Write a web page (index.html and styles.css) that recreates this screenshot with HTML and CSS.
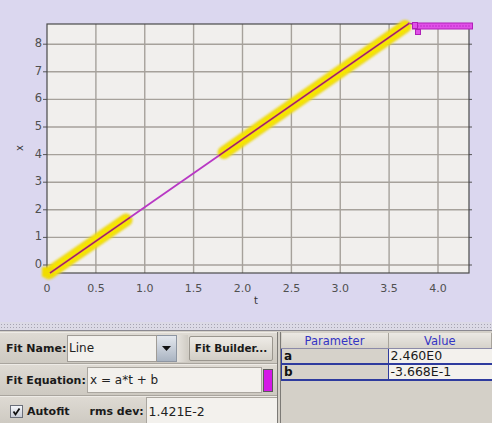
FILE: index.html
```html
<!DOCTYPE html>
<html>
<head>
<meta charset="utf-8">
<link rel="stylesheet" href="styles.css">
</head>
<body>
<div class="app">
  <svg class="plot" width="492" height="322" viewBox="0 0 492 322">
    <defs>
      <filter id="soft" x="-10%" y="-10%" width="120%" height="120%">
        <feGaussianBlur stdDeviation="0.8"/>
      </filter>
    </defs>
    <rect class="plot-bg" x="47" y="24" width="422" height="249"/>
    <g class="grid">
      <line x1="95.9" y1="24" x2="95.9" y2="273"/>
      <line x1="144.75" y1="24" x2="144.75" y2="273"/>
      <line x1="193.6" y1="24" x2="193.6" y2="273"/>
      <line x1="242.5" y1="24" x2="242.5" y2="273"/>
      <line x1="291.4" y1="24" x2="291.4" y2="273"/>
      <line x1="340.25" y1="24" x2="340.25" y2="273"/>
      <line x1="389.1" y1="24" x2="389.1" y2="273"/>
      <line x1="438" y1="24" x2="438" y2="273"/>
      <line x1="47" y1="265" x2="469" y2="265"/>
      <line x1="47" y1="237.4" x2="469" y2="237.4"/>
      <line x1="47" y1="209.8" x2="469" y2="209.8"/>
      <line x1="47" y1="182.2" x2="469" y2="182.2"/>
      <line x1="47" y1="154.6" x2="469" y2="154.6"/>
      <line x1="47" y1="127" x2="469" y2="127"/>
      <line x1="47" y1="99.4" x2="469" y2="99.4"/>
      <line x1="47" y1="71.8" x2="469" y2="71.8"/>
      <line x1="47" y1="44.2" x2="469" y2="44.2"/>
    </g>
    <g class="ticks">
      <line x1="43" y1="265" x2="47" y2="265"/>
      <line x1="43" y1="237.4" x2="47" y2="237.4"/>
      <line x1="43" y1="209.8" x2="47" y2="209.8"/>
      <line x1="43" y1="182.2" x2="47" y2="182.2"/>
      <line x1="43" y1="154.6" x2="47" y2="154.6"/>
      <line x1="43" y1="127" x2="47" y2="127"/>
      <line x1="43" y1="99.4" x2="47" y2="99.4"/>
      <line x1="43" y1="71.8" x2="47" y2="71.8"/>
      <line x1="43" y1="44.2" x2="47" y2="44.2"/>
      <line x1="469" y1="265" x2="472" y2="265"/>
      <line x1="469" y1="237.4" x2="472" y2="237.4"/>
      <line x1="469" y1="209.8" x2="472" y2="209.8"/>
      <line x1="469" y1="182.2" x2="472" y2="182.2"/>
      <line x1="469" y1="154.6" x2="472" y2="154.6"/>
      <line x1="469" y1="127" x2="472" y2="127"/>
      <line x1="469" y1="99.4" x2="472" y2="99.4"/>
      <line x1="469" y1="71.8" x2="472" y2="71.8"/>
      <line x1="469" y1="44.2" x2="472" y2="44.2"/>
    </g>
    <rect class="frame" x="47" y="24" width="422" height="249"/>
    <g class="ylabels">
      <text x="42" y="268">0</text>
      <text x="42" y="240.4">1</text>
      <text x="42" y="212.8">2</text>
      <text x="42" y="185.2">3</text>
      <text x="42" y="157.6">4</text>
      <text x="42" y="130">5</text>
      <text x="42" y="102.4">6</text>
      <text x="42" y="74.8">7</text>
      <text x="42" y="47.2">8</text>
    </g>
    <g class="xlabels">
      <text x="47" y="292">0</text>
      <text x="95.9" y="292">0.5</text>
      <text x="144.75" y="292">1.0</text>
      <text x="193.6" y="292">1.5</text>
      <text x="242.5" y="292">2.0</text>
      <text x="291.4" y="292">2.5</text>
      <text x="340.25" y="292">3.0</text>
      <text x="389.1" y="292">3.5</text>
      <text x="438" y="292">4.0</text>
    </g>
    <text class="axis-title" x="256" y="304">t</text>
    <text class="axis-title" x="23" y="148" transform="rotate(-90 23 148)">x</text>

    <g class="band" filter="url(#soft)">
      <line class="band-outer" x1="49" y1="273" x2="126" y2="220"/>
      <line class="band-inner" x1="49" y1="273" x2="126" y2="220"/>
      <line class="band-outer" x1="224" y1="152.5" x2="405" y2="26.5"/>
      <line class="band-inner" x1="224" y1="152.5" x2="405" y2="26.5"/>
      <rect class="band-blob" x="42" y="267" width="12" height="10"/>
    </g>
    <line class="fit" x1="50" y1="273" x2="409" y2="23.5"/>
    <line class="datal" x1="50" y1="273" x2="130" y2="217.4"/>
    <line class="datal" x1="219" y1="155.6" x2="409" y2="23.5"/>
    <g class="marks">
      <line x1="408" y1="23" x2="414" y2="24"/>
      <rect x="412.5" y="23" width="60" height="6"/>
      <line class="mark-inner" x1="414" y1="26" x2="471" y2="26"/>
      <rect x="415.5" y="29.5" width="5" height="5"/>
      <rect x="412.5" y="22.5" width="5" height="6"/>
    </g>
  </svg>
  <div class="divider"></div>
  <div class="panels">
    <div class="fitpanel">
      <div class="row">
        <span class="lbl lbl-name">Fit Name:</span>
        <div class="combo">
          <span class="combo-text">Line</span>
          <span class="combo-btn"><svg width="9" height="5" viewBox="0 0 9 5"><path d="M0 0 H9 L4.5 5 Z" fill="#111"/></svg></span>
        </div>
        <span class="sep"></span>
        <span class="btn">Fit Builder...</span>
      </div>
      <div class="row">
        <span class="lbl lbl-eq">Fit Equation:</span>
        <div class="field field-eq">x = a*t + b</div>
        <span class="swatch"></span>
      </div>
      <div class="row row-last">
        <span class="check"><svg width="11" height="11" viewBox="0 0 11 11"><path d="M2.5 5.5 L4.5 8.5 L8.5 2.5" fill="none" stroke="#111" stroke-width="1.8"/></svg></span>
        <span class="lbl lbl-auto">Autofit</span>
        <span class="lbl lbl-rms">rms dev:</span>
        <div class="field field-rms">1.421E-2</div>
      </div>
    </div>
    <div class="tablepanel">
      <table class="params">
        <thead>
          <tr><th class="c1">Parameter</th><th class="c2">Value</th></tr>
        </thead>
        <tbody>
          <tr><td class="c1 pname">a</td><td class="c2 pval">2.460E0</td></tr>
          <tr><td class="c1 pname">b</td><td class="c2 pval">-3.668E-1</td></tr>
        </tbody>
      </table>
    </div>
  </div>
</div>
</body>
</html>
```

FILE: styles.css
```css
html, body {
  margin: 0;
  padding: 0;
}
body {
  width: 492px;
  height: 423px;
  overflow: hidden;
  background: #dbd7ef;
  font-family: "DejaVu Sans", "Noto Sans", sans-serif;
}
.app {
  width: 492px;
  height: 423px;
  display: flex;
  flex-direction: column;
}
.plot {
  display: block;
  flex: none;
  overflow: visible;
}
.plot-bg { fill: #f1efed; }
.grid line { stroke: #a6a19b; stroke-width: 1.4; }
.ticks line { stroke: #555; stroke-width: 1; }
.frame { fill: none; stroke: #4a4a4a; stroke-width: 1.2; }
.ylabels text {
  font-family: "DejaVu Sans", sans-serif;
  font-size: 11.5px;
  fill: #505050;
  text-anchor: end;
}
.xlabels text {
  font-family: "DejaVu Sans", sans-serif;
  font-size: 11px;
  fill: #505050;
  text-anchor: middle;
}
.axis-title {
  font-family: "DejaVu Sans", sans-serif;
  font-size: 10px;
  fill: #333;
  text-anchor: middle;
}
.band-outer { stroke: #ecd81a; stroke-width: 13; stroke-linecap: round; }
.band-inner { stroke: #f7e600; stroke-width: 9; stroke-linecap: round; }
.band-blob { fill: #f0dc00; }
.fit { stroke: #b838c4; stroke-width: 1.8; }
.datal { stroke: #a83040; stroke-width: 1.2; }
.marks rect, .marks line { fill: #e050e8; stroke: #b020b8; stroke-width: 1; }
.marks .mark-inner { stroke: #c030c8; stroke-width: 1; stroke-dasharray: 2 1; }

.divider {
  flex: none;
  height: 8px;
  background-color: #dcdae6;
  background-image: radial-gradient(circle, #a6a4b2 0.7px, transparent 0.9px);
  background-size: 3px 3px;
  background-position: 0 1px;
  border-bottom: 1px solid #8a8890;
}
.panels {
  flex: 1;
  display: flex;
  background: #d4d0c8;
  padding-top: 1px;
}
.fitpanel {
  width: 277px;
  border-right: 1px solid #7c7a76;
  display: flex;
  flex-direction: column;
}
.row {
  height: 30px;
  display: flex;
  align-items: center;
  border-top: 1px solid #eeebe6;
  border-bottom: 1px solid #a9a59e;
  background: linear-gradient(#dedad3, #cdc9c1);
}
.row-last { border-bottom: none; flex: 1; }
.lbl {
  font-weight: bold;
  font-size: 11px;
  color: #1a1a1a;
  white-space: nowrap;
  box-sizing: border-box;
}
.lbl-name { width: 67px; padding-left: 6px; }
.lbl-eq { width: 87px; padding-left: 6px; }
.lbl-auto { margin-left: 4px; }
.lbl-rms { margin-left: 20px; width: 55px; }
.combo {
  display: flex;
  height: 27px;
  width: 110px;
}
.combo-text {
  flex: 1;
  background: #f2f0ec;
  border: 1px solid #a09c96;
  font-size: 12px;
  color: #222;
  display: flex;
  align-items: center;
  padding-left: 1px;
}
.combo-btn {
  width: 19px;
  border: 1px solid #8e96a2;
  border-left: none;
  background: linear-gradient(#e4e8ee, #aab4c2);
  display: flex;
  align-items: center;
  justify-content: center;
}
.sep {
  width: 11px;
  height: 27px;
  background: linear-gradient(90deg, #e6e3de, #d0ccc4);
}
.btn {
  width: 84px;
  height: 25px;
  box-sizing: border-box;
  margin-left: 1px;
  border: 1px solid #9a968e;
  border-radius: 2px;
  background: linear-gradient(#eeebe6, #d2cec6);
  font-weight: bold;
  font-size: 10.5px;
  color: #1a1a1a;
  display: flex;
  align-items: center;
  justify-content: center;
  white-space: nowrap;
}
.field {
  background: #f3f1ed;
  border: 1px solid #aaa69f;
  box-sizing: border-box;
  font-size: 12px;
  color: #222;
  display: flex;
  align-items: center;
  padding-left: 2px;
  white-space: nowrap;
}
.field-eq { width: 175px; height: 26px; }
.swatch {
  width: 10px;
  height: 23px;
  margin-left: 1px;
  box-sizing: border-box;
  background: #d418e6;
  border: 1px solid #5a5a5a;
}
.check {
  margin-left: 10px;
  width: 13px;
  height: 13px;
  box-sizing: border-box;
  border: 1px solid #6a6f7a;
  background: linear-gradient(#f4f6fa, #c8ccd6);
  display: flex;
  align-items: center;
  justify-content: center;
}
.field-rms {
  flex: 1;
  height: 28px;
  margin-left: 1px;
  align-self: flex-end;
  border-bottom: none;
  border-right: none;
  font-size: 12.5px;
}
.tablepanel {
  flex: 1;
  margin-left: 2px;
  border-left: 1px solid #7c7a76;
  padding-top: 1px;
}
.params {
  border-collapse: collapse;
  width: 100%;
  table-layout: fixed;
}
.params .c1 { width: 106px; }
.params th {
  height: 15px;
  padding: 0;
  font-weight: normal;
  font-size: 11.5px;
  color: #3434c4;
  text-align: center;
  background: linear-gradient(#ebe8e3, #d6d2ca);
  border-right: 1px solid #a8a49c;
  border-bottom: 1px solid #8c8aa8;
  line-height: 14px;
}
.params td {
  height: 14px;
  padding: 0 0 0 2px;
  border-bottom: 2px solid #2e3b9e;
  line-height: 14px;
  white-space: nowrap;
}
.params td.c1 {
  border-left: 1px solid #2e3b9e;
  border-right: 1px solid #2e3b9e;
}
.pname {
  font-weight: bold;
  font-size: 12px;
  color: #111;
  background: #d6d2ca;
}
.pval {
  font-size: 12.5px;
  color: #1a1a1a;
  background: #f3f1ed;
}
```
